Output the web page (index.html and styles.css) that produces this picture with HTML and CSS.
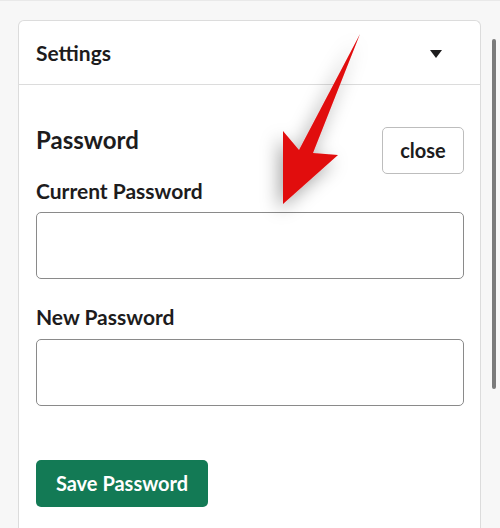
FILE: index.html
```html
<!DOCTYPE html>
<html lang="en">
<head>
<meta charset="utf-8">
<title>Settings</title>
<link rel="stylesheet" href="styles.css">
</head>
<body>
<div class="page">
  <section class="card">
    <header class="card-header">
      <span class="card-title">Settings</span>
      <span class="caret" aria-hidden="true"></span>
    </header>
    <div class="card-body">
      <div class="title-row">
        <h2 class="section-title">Password</h2>
        <button class="btn-close" type="button">close</button>
      </div>
      <label class="field-label label-current" for="cur">Current Password</label>
      <input class="field-input input-current" id="cur" type="password">
      <label class="field-label label-new" for="new">New Password</label>
      <input class="field-input input-new" id="new" type="password">
      <button class="btn-save" type="button">Save Password</button>
    </div>
  </section>
  <div class="scrollbar"></div>
  <svg class="arrow" width="500" height="528" viewBox="0 0 500 528" aria-hidden="true">
    <defs>
      <filter id="sh" x="-50%" y="-50%" width="200%" height="200%">
        <feDropShadow dx="-4" dy="6" stdDeviation="9" flood-color="#000" flood-opacity="0.35"/>
      </filter>
    </defs>
    <path d="M360,33 L313,152 L338,154 L283,203 L283,130 L299,149 Z" fill="#e10a0d" filter="url(#sh)"/>
  </svg>
</div>
</body>
</html>
```

FILE: styles.css
```css
* { box-sizing: border-box; }
html, body {
  margin: 0;
  padding: 0;
  background: #f7f7f7;
  font-family: Lato, "Noto Sans", sans-serif;
  color: #1d1c1d;
  overflow: hidden;
}
.page {
  position: relative;
  width: 500px;
  height: 528px;
  border-top: 1px solid #e9e9e9;
  padding: 19px 19px 0 18px;
}
.card {
  background: #fff;
  border: 1px solid #dcdcdc;
  border-bottom: none;
  border-radius: 6px 6px 0 0;
  height: 520px;
}
.card-header {
  height: 64px;
  display: flex;
  align-items: center;
  justify-content: space-between;
  padding: 0 38px 0 17px;
  border-bottom: 1px solid #dcdcdc;
}
.card-title {
  font-size: 21px;
  font-weight: 700;
  margin-top: -1px;
}
.caret {
  width: 0;
  height: 0;
  border-left: 6px solid transparent;
  border-right: 6px solid transparent;
  border-top: 8px solid #1d1c1d;
  margin-top: 2px;
}
.card-body {
  padding: 40px 16px 0 17px;
  display: flex;
  flex-direction: column;
}
.title-row {
  display: flex;
  justify-content: space-between;
  align-items: flex-start;
}
.section-title {
  margin: 1px 0 0;
  font-size: 24px;
  line-height: 28px;
  font-weight: 700;
}
.btn-close {
  margin-top: 2px;
  width: 82px;
  height: 47px;
  background: #fff;
  border: 1px solid #bdbdbd;
  border-radius: 5px;
  font-family: inherit;
  font-size: 20px;
  font-weight: 700;
  color: #1d1c1d;
  padding: 0 0 2px;
}
.field-label {
  font-size: 21px;
  line-height: 26px;
  font-weight: 700;
}
.label-current { margin-top: 4px; }
.label-new { margin-top: 25px; }
.field-input {
  height: 67px;
  width: 100%;
  border: 1px solid #8a8a8a;
  border-radius: 5px;
  background: #fff;
}
.input-current { margin-top: 8px; }
.input-new { margin-top: 9px; }
.btn-save {
  align-self: flex-start;
  margin-top: 54px;
  width: 172px;
  height: 47px;
  background: #137a55;
  color: #fff;
  border: none;
  border-radius: 5px;
  font-family: inherit;
  font-size: 20px;
  font-weight: 700;
  padding: 0 0 2px;
}
.scrollbar {
  position: absolute;
  left: 492px;
  top: 38px;
  width: 4px;
  height: 350px;
  background: #7b7b7b;
  border-radius: 2px;
}
.arrow {
  position: absolute;
  left: 0;
  top: 0;
  pointer-events: none;
}
```
